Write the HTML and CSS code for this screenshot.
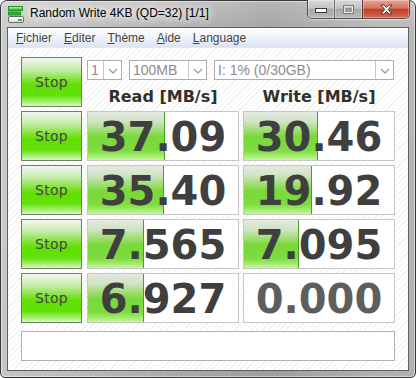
FILE: index.html
```html
<!DOCTYPE html>
<html>
<head>
<meta charset="utf-8">
<link rel="stylesheet" href="styles.css">
</head>
<body>
<div class="window">
  <div class="titlebar">
    <svg class="app-icon" width="16" height="17" viewBox="0 0 16 17">
      <rect x="0.5" y="0.5" width="14" height="4" fill="#3fc53f" stroke="#2a8f2a"/>
      <rect x="1" y="1" width="13" height="1.5" fill="#8ef08e"/>
      <rect x="0.5" y="6" width="12" height="3" fill="#2fb52f" stroke="#2a8a2a"/>
      <rect x="0.5" y="10.5" width="15" height="6" rx="1.5" fill="#e4e4e4" stroke="#6a6a6a"/>
      <rect x="1.5" y="11.5" width="13" height="2" fill="#fafafa"/>
      <rect x="10" y="13" width="4" height="2" fill="#2fbf2f"/>
    </svg>
    <span class="title">Random Write 4KB (QD=32) [1/1]</span>
    <div class="caption">
      <div class="cbtn min">
        <svg width="12" height="6" viewBox="0 0 12 6"><rect x="0.5" y="0.5" width="11" height="4" fill="#fff" stroke="#3a3a3a"/></svg>
      </div>
      <div class="cbtn max">
        <svg width="11" height="9" viewBox="0 0 11 9"><rect x="0.5" y="0.5" width="10" height="8" fill="none" stroke="#7a7a7a"/><rect x="1.5" y="1.5" width="8" height="6" fill="none" stroke="#e8e8e8"/><rect x="3" y="3.5" width="5" height="2.5" fill="none" stroke="#8a8a8a"/></svg>
      </div>
      <div class="cbtn close">
        <svg width="13" height="11" viewBox="0 0 13 11"><path d="M1 1 L4 1 L6.5 3.5 L9 1 L12 1 L8.2 5.5 L12 10 L9 10 L6.5 7.5 L4 10 L1 10 L4.8 5.5 Z" fill="#fff" stroke="#3a2a2a" stroke-width="0.9" stroke-linejoin="round"/></svg>
      </div>
    </div>
  </div>
  <div class="client">
    <div class="menubar">
      <span class="menu"><u>F</u>ichier</span>
      <span class="menu"><u>E</u>diter</span>
      <span class="menu"><u>T</u>hème</span>
      <span class="menu"><u>A</u>ide</span>
      <span class="menu"><u>L</u>anguage</span>
    </div>
    <div class="content">
      <div class="stop">Stop</div>
      <div class="controls">
        <div class="combos">
          <div class="combo c-count"><span class="ctext">1</span><span class="arrow"><svg width="10" height="6" viewBox="0 0 10 6"><path d="M1 1 L5 5 L9 1" fill="none" stroke="#8ea4bd" stroke-width="1.4"/></svg></span></div>
          <div class="combo c-size"><span class="ctext">100MB</span><span class="arrow"><svg width="10" height="6" viewBox="0 0 10 6"><path d="M1 1 L5 5 L9 1" fill="none" stroke="#8ea4bd" stroke-width="1.4"/></svg></span></div>
          <div class="combo c-drive"><span class="ctext">I: 1% (0/30GB)</span><span class="arrow"><svg width="10" height="6" viewBox="0 0 10 6"><path d="M1 1 L5 5 L9 1" fill="none" stroke="#8ea4bd" stroke-width="1.4"/></svg></span></div>
        </div>
        <div class="headers">
          <div class="head">Read [MB/s]</div>
          <div class="head">Write [MB/s]</div>
        </div>
      </div>

      <div class="stop">Stop</div>
      <div class="val"><div class="bar" style="width:77px"></div><span class="num">37.09</span></div>
      <div class="val"><div class="bar" style="width:74px"></div><span class="num">30.46</span></div>

      <div class="stop">Stop</div>
      <div class="val"><div class="bar" style="width:76px"></div><span class="num">35.40</span></div>
      <div class="val"><div class="bar" style="width:68px"></div><span class="num">19.92</span></div>

      <div class="stop">Stop</div>
      <div class="val"><div class="bar" style="width:56px"></div><span class="num">7.565</span></div>
      <div class="val"><div class="bar" style="width:55px"></div><span class="num">7.095</span></div>

      <div class="stop">Stop</div>
      <div class="val"><div class="bar" style="width:56px"></div><span class="num">6.927</span></div>
      <div class="val"><span class="num zero">0.000</span></div>

      <div class="status"></div>
    </div>
  </div>
</div>
</body>
</html>
```
FILE: styles.css
```css
* { box-sizing: border-box; }
html, body { margin: 0; padding: 0; background: #ffffff; }
body { width: 416px; height: 378px; overflow: hidden; }

.window {
  width: 416px;
  height: 378px;
  border: 1px solid #3a3a3a;
  border-radius: 7px 7px 5px 5px;
  background:
    linear-gradient(to right, rgba(230,230,230,0.5), rgba(190,190,190,0.1) 45%, rgba(140,140,140,0.3) 65%, rgba(220,220,220,0.2) 90%),
    linear-gradient(#c6c6c6, #b0b0b0 28px, #a6a6a6);
  box-shadow: inset 0 0 0 1px rgba(255,255,255,0.45);
  padding: 0 6px 6px 6px;
  display: flex;
  flex-direction: column;
}

.titlebar {
  height: 27px;
  display: flex;
  align-items: flex-start;
}
.app-icon { margin: 5px 0 0 1px; flex: none; }
.title {
  margin: 5px 0 0 6px;
  font: 12px/15px "Liberation Sans", Arial, sans-serif;
  color: #000;
  text-shadow: 0 0 6px rgba(255,255,255,0.95), 0 0 10px rgba(255,255,255,0.9), 0 0 14px rgba(255,255,255,0.8);
}
.caption {
  margin-left: auto;
  margin-right: -1px;
  margin-top: -1px;
  display: flex;
  height: 19px;
  border: 1px solid #4c4c4c;
  border-top: none;
  border-radius: 0 0 5px 5px;
  overflow: hidden;
  box-shadow: 0 1px 0 rgba(255,255,255,0.5);
}
.cbtn {
  display: flex;
  align-items: center;
  justify-content: center;
  height: 100%;
  background: linear-gradient(#d8d8d8, #c4c4c4 45%, #a9a9a9 52%, #b8b8b8);
  box-shadow: inset 0 0 0 1px rgba(255,255,255,0.35);
}
.cbtn.min { width: 26px; padding-top: 3px; }
.cbtn.max { width: 28px; border-left: 1px solid #6a6a6a; }
.cbtn.close {
  width: 47px;
  border-left: 1px solid #5a3a32;
  background: linear-gradient(#e6a597, #d4725e 45%, #c03d26 52%, #d46a52);
}

.client {
  flex: 1;
  border: 1px solid #5f5f5f;
  background: #fff;
  display: flex;
  flex-direction: column;
}

.menubar {
  height: 20px;
  padding: 2px 0 0 8px;
  display: flex;
  gap: 12px;
  background: linear-gradient(#fdfdfe, #eef2f8 55%, #dce4f0);
  border-bottom: 1px solid #e2e8f1;
}
.menu {
  font: 12px/17px "Liberation Sans", Arial, sans-serif;
  color: #444444;
}
.menu u { text-decoration: underline; text-underline-offset: 1px; }

.content {
  flex: 1;
  padding: 9px 13px 9px 13px;
  background-color: #fff;
  background-image: repeating-linear-gradient(135deg, #ffffff 0 3px, #f1f1f1 3px 4px);
  display: grid;
  grid-template-columns: 62px 152px 152px;
  grid-template-rows: 50px 50px 50px 50px 50px 34px;
  column-gap: 4px;
  row-gap: 4px;
  align-content: start;
}

.stop {
  width: 61px;
  display: flex;
  align-items: center;
  justify-content: center;
  border: 1px solid #6e806c;
  background: linear-gradient(#f3f7f1 0%, #c2eca6 25%, #78e228 48%, #5ee000 58%, #63e108 78%, #a8ee78 92%, #d6f9c0 100%);
  font: 14px/16px "DejaVu Sans", "Liberation Sans", sans-serif;
  color: #454545;
  letter-spacing: 0.3px;
}

.controls {
  grid-column: 2 / 4;
  display: flex;
  flex-direction: column;
}
.combos {
  margin-top: 3px;
  display: flex;
  gap: 7px;
}
.combo {
  height: 20px;
  border: 1px solid #adadad;
  background: #fff;
  display: flex;
}
.c-count { width: 35px; }
.c-size { width: 78px; }
.c-drive { width: 180px; }
.ctext {
  flex: 1;
  padding-left: 3px;
  font: 14px/18px "Liberation Sans", Arial, sans-serif;
  color: #8c8c8c;
  white-space: nowrap;
  overflow: hidden;
}
.arrow {
  width: 18px;
  border-left: 1px solid #c6c6c6;
  display: flex;
  align-items: center;
  justify-content: center;
  padding-top: 1px;
}
.headers {
  margin-top: 7px;
  display: grid;
  grid-template-columns: 152px 152px;
  column-gap: 4px;
}
.head {
  text-align: center;
  font: bold 16px/19px "DejaVu Sans", Verdana, sans-serif;
  color: #33302a;
}

.val {
  border: 1px solid #c6c6c6;
  background: #fff;
  display: grid;
  align-items: center;
}
.bar {
  grid-area: 1 / 1;
  justify-self: start;
  height: 100%;
  border-right: 1px solid #45a024;
  background: linear-gradient(#e4e9e1 0%, #cfe4c4 20%, #96dc62 42%, #79d83a 52%, #7edb40 80%, #a6ec70 92%, #c6f7a0 100%);
}
.num {
  grid-area: 1 / 1;
  text-align: center;
  padding-top: 1px;
  font: bold 40px/46px "DejaVu Sans", Verdana, sans-serif;
  color: #3f3f3f;
}
.num.zero { color: #5e5e5e; }

.status {
  grid-column: 1 / 4;
  margin-top: 4px;
  width: 374px;
  height: 30px;
  border: 1px solid #b2b2b2;
  background: #fff;
}
```
